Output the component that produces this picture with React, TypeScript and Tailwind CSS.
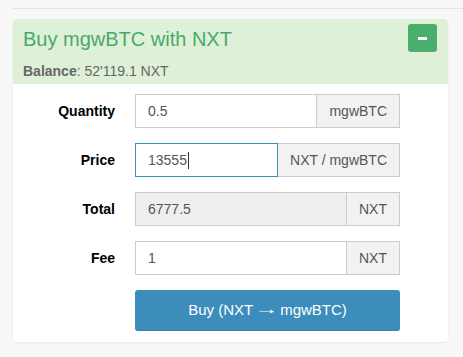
import React from "react";

const font = { fontFamily: '"Liberation Sans", Arial, sans-serif' };

function Row({
  label,
  value,
  addon,
  focused,
  disabled,
}: {
  label: string;
  value: string;
  addon: string;
  focused?: boolean;
  disabled?: boolean;
}) {
  return (
    <div className="flex items-center h-[34px]">
      <div className="w-[102px] text-right text-[14px] font-bold text-black">{label}</div>
      <div className="ml-[20px] w-[265px] flex h-[34px]">
        <div
          className={
            "flex-1 flex items-center px-[12px] text-[14px] text-[#555] border " +
            (focused ? "border-[#3c8dbc] bg-white" : disabled ? "border-[#cccccc] bg-[#eeeeee]" : "border-[#cccccc] bg-white")
          }
        >
          <span>{value}</span>
          {focused && <span className="inline-block w-px h-[17px] bg-[#333] ml-px" />}
        </div>
        <div className="flex items-center px-[12px] text-[14px] text-[#555] bg-[#f2f2f2] border-y border-r border-[#cccccc]">
          {addon}
        </div>
      </div>
    </div>
  );
}

export default function App() {
  return (
    <div className="w-[463px] h-[357px] bg-[#f8f8f8] overflow-hidden" style={font}>
      <div className="pt-[8px] pl-[13px]">
        <div className="h-px bg-[#e5e5e5]" />
      </div>
      <div className="mt-[10px] ml-[13px] w-[435px] bg-white rounded-[4px] shadow-[0_1px_2px_rgba(0,0,0,0.08)]">
        <div className="bg-[#dff0d8] rounded-t-[4px] h-[65px] pl-[10px] pr-[11px] relative">
          <div className="pt-[9px] text-[20px] leading-[22px] text-[#4aa96a]">Buy mgwBTC with NXT</div>
          <div className="mt-[13px] text-[14px] leading-[16px] text-[#666]">
            <span className="font-bold">Balance</span>: 52'119.1 NXT
          </div>
          <div className="absolute right-[11px] top-[5px] w-[29px] h-[28px] rounded-[3px] bg-[#4aae6c] flex items-center justify-center">
            <div className="w-[9px] h-[3px] bg-white" />
          </div>
        </div>
        <div className="pt-[10px] pb-[11px] flex flex-col gap-[15px]">
          <Row label="Quantity" value="0.5" addon="mgwBTC" />
          <Row label="Price" value="13555" addon="NXT / mgwBTC" focused />
          <Row label="Total" value="6777.5" addon="NXT" disabled />
          <Row label="Fee" value="1" addon="NXT" />
          <div className="flex">
            <div className="ml-[122px] w-[265px] h-[41px] rounded-[3px] bg-[#3c8dbc] border-b border-[#367fa9] flex items-center justify-center text-white text-[15px]">
              <span className="flex items-center">
                Buy (NXT
                <span className="inline-block mx-[6px] -mt-[2px] scale-x-[1.6]">→</span>
                mgwBTC)
              </span>
            </div>
          </div>
        </div>
      </div>
      <div className="mt-[15px] ml-[13px] w-[435px] h-[4px] bg-white border-t-2 border-[#f56954] rounded-t-[3px]" />
    </div>
  );
}
